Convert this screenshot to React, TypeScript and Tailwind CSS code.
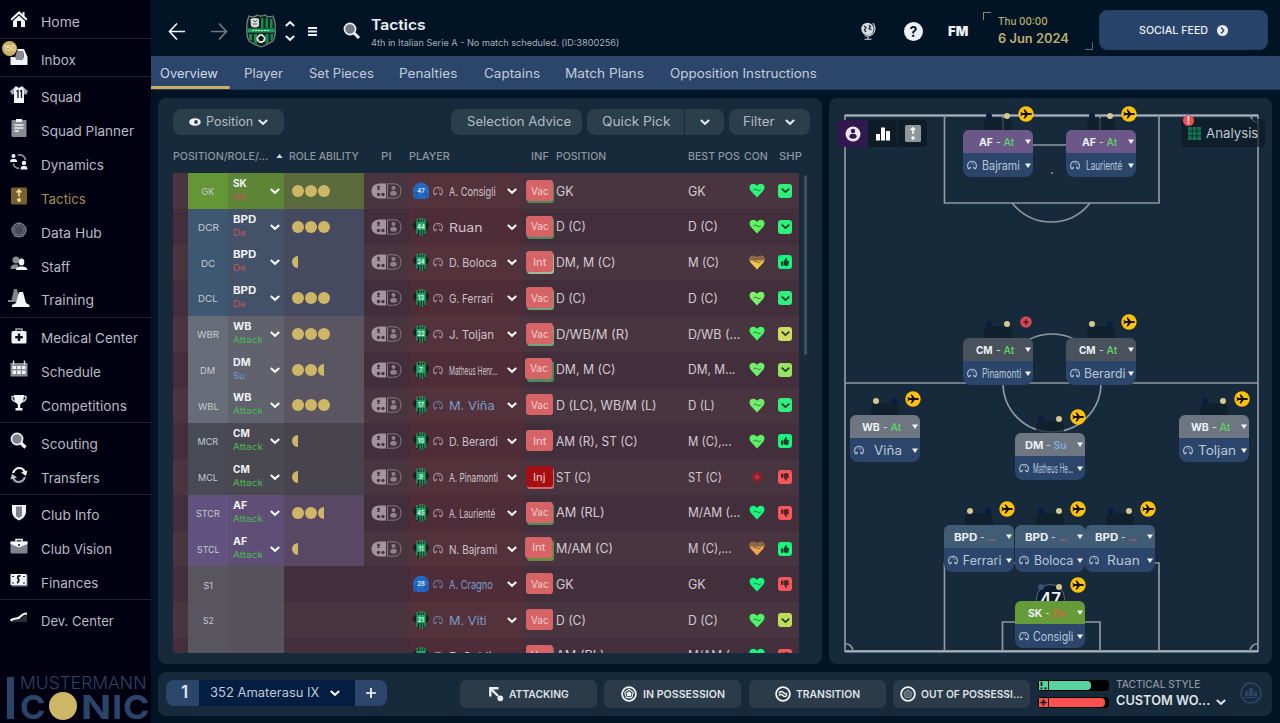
import React, { useLayoutEffect, useRef, useState } from "react";
import { FaThumbsUp, FaThumbsDown } from "react-icons/fa";

// Text squeezed or stretched to a fixed width, like the in-game labels
function Fit({ w, children, className = "" }: { w: number; children: string; className?: string }) {
  const ref = useRef<HTMLSpanElement>(null);
  const [scale, setScale] = useState(1);
  useLayoutEffect(() => {
    if (ref.current) setScale(w / ref.current.offsetWidth);
  }, [w, children]);
  return (
    <span className={`block shrink-0 whitespace-nowrap ${className}`} style={{ width: w }}>
      <span ref={ref} className="inline-block origin-left translate-y-px" style={{ transform: `scaleX(${scale})` }}>
        {children}
      </span>
    </span>
  );
}

function Chevron({ className = "w-2.5 h-2.5" }: { className?: string }) {
  return (
    <svg viewBox="0 0 10 10" className={`shrink-0 ${className}`} fill="none" stroke="currentColor" strokeWidth="2">
      <path d="M0.8 3 L5 6.8 L9.2 3" />
    </svg>
  );
}

function PersonOutline({ className = "" }: { className?: string }) {
  return (
    <svg viewBox="0 0 10 10" className={`w-2.5 h-2.5 shrink-0 ${className}`}>
      <path d="M1.600 9 C0.400 7 0.500 4.500 1.500 2.800 C3 0.700 7 0.700 8.500 2.800 C9.500 4.500 9.600 7 8.400 9" fill="none" stroke="currentColor" strokeWidth="1.100" />
      <path d="M3.600 3.300 Q5 2 6.400 3.300 V5" fill="none" stroke="currentColor" strokeWidth="0.600" />
      <path d="M1.300 9.300 Q2 7 4 6.600 L3.800 8 L2.600 9.300 Z M8.700 9.300 Q8 7 6 6.600 L6.200 8 L7.400 9.300 Z" fill="currentColor" />
    </svg>
  );
}

/* ---------- sidebar ---------- */

const icons: Record<string, React.ReactNode> = {
  Home: (
    <>
      <path d="M9 1 L0.5 9 L2 10.5 L9 4 L16 10.5 L17.5 9 L14.5 6 V2 H12.5 V4.2 Z" fill="#f4f4f6" />
      <path d="M3 11 L9 5.5 L15 11 V17 H11 V11 H7 V17 H3 Z" fill="#f4f4f6" />
    </>
  ),
  Inbox: (
    <>
      <path d="M7 1 H14 L17.5 9 V17 H0.5 V9 H5 L7 12 H12 L14 9 L13 3 H8 Z" fill="#f4f4f6" />
      <path d="M7 3 H13 L14 9 L12 12 H7 L5 9 Z" fill="#8a8a98" />
    </>
  ),
  Squad: (
    <>
      <path d="M5 1 L0 5 L2 9 L5 7 M13 1 L18 5 L16 9 L13 7" fill="#a4a4b0" />
      <path d="M5 0.5 H7 Q9 3 11 0.5 H13 L14 5 V17 H4 V5 Z" fill="#f4f4f6" />
      <path d="M6.5 5.5 L8 4.5 V12 M10 5.5 L11.5 4.5 V12" fill="none" stroke="#101020" strokeWidth="1.3" />
    </>
  ),
  "Squad Planner": (
    <>
      <rect x="1.5" y="1" width="15" height="17" rx="1" fill="#8a8a95" />
      <path d="M6 0 H12 V3 H6 Z" fill="#f4f4f6" />
      <path d="M4.500 6 H13.500 M4.500 9 H13.500 M4.500 12 H9" stroke="#f4f4f6" strokeWidth="1.3" />
    </>
  ),
  Dynamics: (
    <>
      <circle cx="3.500" cy="3" r="2" fill="#f4f4f6" />
      <path d="M0 9 Q0 6 2.500 6 H4.500 Q7 6 7 9 Z" fill="#f4f4f6" />
      <circle cx="14" cy="10" r="2.200" fill="#f4f4f6" />
      <path d="M10.500 16.500 Q10.500 13 13 13 H15 Q17.500 13 17.500 16.500 Z" fill="#f4f4f6" />
      <path d="M8 2 Q14 1 15.500 7 M3.500 10.500 Q4 15 9 15.500" fill="none" stroke="#8a8a95" strokeWidth="1.800" />
    </>
  ),
  Tactics: (
    <>
      <rect x="1" y="0.500" width="16" height="17" rx="1.500" fill="#75602f" />
      <path d="M9 3 V9.500 M6.500 5.500 L9 3 L11.500 5.500" fill="none" stroke="#f2dc92" strokeWidth="1.600" />
      <circle cx="9" cy="13" r="1.900" fill="#f2dc92" />
    </>
  ),
  "Data Hub": (
    <>
      <circle cx="9" cy="9" r="7" fill="#4a4a57" stroke="#9696a2" strokeWidth="1" />
      <path d="M9 4 L14 8 L12 13.500 H6 L4 8 Z M9 1 V4 M14 8 L17 7 M12 13.500 L14 16 M6 13.500 L4 16 M4 8 L1 7" fill="none" stroke="#6a6a78" strokeWidth="0.900" />
    </>
  ),
  Staff: (
    <>
      <circle cx="6" cy="5" r="3.500" fill="#8a8a95" />
      <path d="M0.500 13 Q1 10 4 9.500 H8 V14 H0.500 Z" fill="#8a8a95" />
      <ellipse cx="11.500" cy="7" rx="2.800" ry="3.500" fill="#f4f4f6" />
      <path d="M6 15 Q6 12 9.500 11.500 H13.500 Q17 12 17.500 15 Z" fill="#f4f4f6" />
    </>
  ),
  Training: (
    <>
      <path d="M4 0 H7 L9.500 11 L11 13 H-2 V11 H1.500 Z" fill="#83838d" />
      <path d="M9 3 H13 L16 14 L19.500 16 V18 H2 V16 L6 14 Z" fill="#f4f4f6" />
    </>
  ),
  "Medical Center": (
    <>
      <path d="M6 5 V2 H12 V5" fill="none" stroke="#a4a4b0" strokeWidth="1.500" />
      <rect x="1.500" y="4" width="15" height="12.500" rx="1.500" fill="#f4f4f6" />
      <path d="M9 6.500 V14 M5.200 10.200 H12.800" stroke="#101020" strokeWidth="2.400" />
    </>
  ),
  Schedule: (
    <>
      <rect x="0.500" y="3" width="17" height="13.500" fill="#8a8a95" />
      <path d="M3.500 0.500 V5 M14.500 0.500 V5" stroke="#d4d4da" strokeWidth="1.500" />
      <path d="M2.500 6 H6 V9 H2.500 Z M7.200 6 H10.800 V9 H7.200 Z M12 6 H15.500 V9 H12 Z M2.500 10.500 H6 V14 H2.500 Z M7.200 10.500 H10.800 V14 H7.200 Z M12 10.500 H15.500 V14 H12 Z" fill="#f4f4f6" />
    </>
  ),
  Competitions: (
    <>
      <path d="M4.500 2.500 H2 Q1.500 7 6.500 8 M13.500 2.500 H16 Q16.500 7 11.500 8" fill="none" stroke="#c8c8d0" strokeWidth="1.500" />
      <path d="M4 1 H14 Q14 8 10.200 10.500 V14 H12.500 V16.500 H5.500 V14 H7.800 V10.500 Q4 8 4 1 Z" fill="#f4f4f6" />
    </>
  ),
  Scouting: (
    <>
      <path d="M10.500 10.500 L15.500 15.500" stroke="#f4f4f6" strokeWidth="3.200" />
      <circle cx="7" cy="7" r="5.600" fill="#83838d" stroke="#f4f4f6" strokeWidth="1.600" />
    </>
  ),
  Transfers: (
    <>
      <path d="M3 7 Q5 2 9.500 2 Q13 2 14.800 6" fill="none" stroke="#f4f4f6" strokeWidth="2.200" />
      <path d="M11 6.500 L17.500 4.500 L16 10 Z" fill="#f4f4f6" />
      <path d="M15 11 Q13 16 8.500 16 Q5 16 3.200 12" fill="none" stroke="#a4a4b0" strokeWidth="2.200" />
      <path d="M7 11.500 L0.500 13.500 L2 8 Z" fill="#c8c8d0" />
    </>
  ),
  "Club Info": (
    <>
      <path d="M2 1 H16 V8 Q16 13 9 16.500 Q2 13 2 8 Z" fill="#f4f4f6" />
      <path d="M6 2.500 H12 V12 L9 14 L6 12 Z" fill="#83838d" />
    </>
  ),
  "Club Vision": (
    <>
      <path d="M6 4 V1.500 H12 V4" fill="none" stroke="#f4f4f6" strokeWidth="1.500" />
      <rect x="0.500" y="3.500" width="17" height="12" rx="1" fill="#83838d" />
      <path d="M0.500 3.500 H17.500 V6 L9 9.500 L0.500 6 Z" fill="#f4f4f6" />
      <circle cx="9" cy="7" r="1" fill="#101020" />
    </>
  ),
  Finances: (
    <>
      <rect x="1.500" y="4" width="16" height="11.500" fill="#83838d" />
      <path d="M0.500 3 H16.500 V14 H0.500 Z" fill="#f4f4f6" />
      <path d="M10.500 5 Q7 4.500 8 7.500 Q10 10 7 12 M3 6 V5 M3 11.500 V12.500 M14 6 V5 M14 11.500 V12.500" fill="none" stroke="#101020" strokeWidth="1.800" />
    </>
  ),
  "Dev. Center": (
    <>
      <path d="M1 12 L6 10 L10 10 L17 5 V13 H1 Z" fill="#2c2c38" />
      <path d="M0.500 11.500 Q3.500 9.500 6 9.500 Q9 9.500 11 7 Q13 4.500 17 4.500" fill="none" stroke="#f4f4f6" strokeWidth="2.200" />
    </>
  ),
};

const menu: [string, number][][] = [
  [["Home", 38.5]],
  [["Inbox", 35]],
  [["Squad", 40], ["Squad Planner", 93.5], ["Dynamics", 63.5], ["Tactics", 45], ["Data Hub", 60.5], ["Staff", 29], ["Training", 52.5]],
  [["Medical Center", 96.5], ["Schedule", 59.5], ["Competitions", 85.5]],
  [["Scouting", 56.5], ["Transfers", 58.5]],
  [["Club Info", 58], ["Club Vision", 71.5], ["Finances", 57]],
  [["Dev. Center", 72.5]],
];

function Sidebar() {
  return (
    <aside className="w-[151px] h-full shrink-0 bg-[#000010] pt-1 flex flex-col">
      {menu.map((group, i) => (
        <div key={i} className={i > 0 ? "border-t border-[#202133] pt-[3px]" : ""}>
          {group.map(([label, w]) => (
            <div key={label} className="relative h-[33.85px] flex items-center pl-2.5 gap-[13px]">
              <svg viewBox="0 0 18 18" className="w-[18px] h-[18px] shrink-0 overflow-visible -mt-1">
                {icons[label]}
              </svg>
              <Fit w={w} className={`text-[13px] pt-px ${label === "Tactics" ? "text-[#a58d50]" : "text-[#b9bac3]"}`}>
                {label}
              </Fit>
              {label === "Inbox" && (
                <span className="absolute left-[2px] -top-px w-[15px] h-[15px] rounded-full bg-[#c9b062] text-[8px] leading-[15px] text-[#f4ecd0] text-center tracking-tighter">
                  150
                </span>
              )}
            </div>
          ))}
        </div>
      ))}
      <div className="mt-auto pl-[7px] flex gap-[6px] h-[49px]">
        <div className="w-[7px] h-[42px] mt-[3px] bg-[#2a4568]" />
        <div className="text-[#2a4568]">
          <Fit w={126} className="text-[17.5px] leading-[15px] font-light">MUSTERMANN</Fit>
          <div className="flex items-center h-[30px] mt-0.5 gap-[4px] font-bold text-[33px] leading-[30px]">
            <Fit w={25}>C</Fit>
            <span className="w-7 h-7 rounded-full bg-[#cdb766] shrink-0" />
            <Fit w={30}>N</Fit>
            <Fit w={10} className="-ml-[3px]">I</Fit>
            <Fit w={26} className="-ml-[3px]">C</Fit>
          </div>
        </div>
      </div>
    </aside>
  );
}

/* ---------- header ---------- */

function Crest() {
  return (
    <svg viewBox="0 0 32 34" className="w-8 h-[34px]">
      <path d="M4 2 Q9 4 12 1 Q16 3 20 1 Q23 4 28 2 Q31 9 30 15 Q31 22 28 27 Q22 31 16 33 Q10 31 4 27 Q1 22 2 15 Q1 9 4 2 Z" fill="#10251f" stroke="#7b807e" strokeWidth="1.300" />
      <path d="M16 4 H18.500 V14 H16 Z M20.500 4 H23 V14 H20.500 Z M25 5 H27.500 V14 H25 Z" fill="#178a50" />
      <path d="M5.500 5 Q10 3 14 5 V12 Q10 15 6 12 Z" fill="#d5d9d7" />
      <path d="M8 6 L10 8 L12 6 M8 10 H12" stroke="#555c5a" strokeWidth="1" fill="none" />
      <rect x="2.500" y="14.500" width="27" height="4" fill="#1d9e5e" />
      <path d="M7 16.500 H25" stroke="#bfe6d0" strokeWidth="1.200" strokeDasharray="2 1" />
      <path d="M4 20 H7 V27 L4 25 Z M9 20 H12 V30 L9 29 Z M20.500 20 H23.500 V29 L20.500 30 Z M25.500 20 H28.500 L27.500 26 L25.500 27 Z" fill="#178a50" />
      <circle cx="16" cy="24.500" r="4.600" fill="#e3e6e5" />
      <path d="M16 22 L18.400 23.800 L17.500 26.500 H14.500 L13.600 23.800 Z M12 22 L13.500 21 M18.500 20.500 L20 22.500 M13 28 L14 28.800 M19 28 L18 29" fill="#161616" stroke="#161616" strokeWidth="1" />
    </svg>
  );
}

function Header() {
  return (
    <header className="h-14 flex items-center pl-[17px] pr-3 pt-[6px] text-[#eef0f3]">
      <svg viewBox="0 0 18 18" className="w-[18px] h-[18px]" fill="none" stroke="currentColor" strokeWidth="1.700">
        <path d="M17 9.500 H1.500 M9 1.500 L1.500 9.500 L9 17.500" />
      </svg>
      <svg viewBox="0 0 18 18" className="w-[18px] h-[18px] ml-6 text-[#6d7780]" fill="none" stroke="currentColor" strokeWidth="1.700">
        <path d="M1 9.500 H16.500 M9 1.500 L16.500 9.500 L9 17.500" />
      </svg>
      <div className="ml-[17px]"><Crest /></div>
      <div className="flex flex-col gap-[4px] ml-[8px]">
        <Chevron className="w-[10px] h-[10px] rotate-180" />
        <Chevron className="w-[10px] h-[10px]" />
      </div>
      <svg viewBox="0 0 9 9" className="w-[9px] h-[9px] ml-[13px]" stroke="currentColor" strokeWidth="1.900">
        <path d="M0 1 H9 M0 4.500 H9 M0 8 H9" />
      </svg>
      <svg viewBox="0 0 18 18" className="w-[18px] h-[18px] ml-[26px]">
        <path d="M10.500 10.500 L16 16" stroke="#f4f4f6" strokeWidth="3" />
        <circle cx="7" cy="7" r="5.600" fill="#717b84" stroke="#f4f4f6" strokeWidth="1.600" />
      </svg>
      <div className="ml-[10px]">
        <Fit w={55} className="text-[14.5px] leading-[20px] font-semibold">Tactics</Fit>
        <Fit w={248} className="text-[9px] leading-[14px] mt-px text-[#a7b0b8]">4th in Italian Serie A - No match scheduled. (ID:3800256)</Fit>
      </div>

      <svg viewBox="0 0 18 18" className="w-[18px] h-[18px] ml-auto text-[#d8dcdf]">
        <circle cx="7.500" cy="7" r="6.200" fill="currentColor" />
        <path d="M4 4 L6 5.500 L4.500 8 L6 10 M9 3 L10.500 4.500 L9 6.500 L11.500 8" fill="none" stroke="#243441" strokeWidth="1.400" />
        <path d="M13 1 Q17.500 8 12 12.500 Q8.500 15 4.500 13.500 M8 14 V17 M4.500 17.200 H11.500" fill="none" stroke="currentColor" strokeWidth="1.100" />
      </svg>
      <div className="w-[19px] h-[19px] ml-[26px] rounded-full bg-[#eef0f3] text-[#051526] text-[14px] leading-[20px] font-bold text-center">?</div>
      <Fit w={20} className="ml-[25px] text-[12.5px] font-black">FM</Fit>
      <div className="relative ml-[15px] w-[110px] h-[38px] pl-[15px] -mt-px text-[#bfae6c]">
        <span className="absolute left-0 top-0 w-2 h-2 border-t border-l border-[#8f8a6a]" />
        <span className="absolute right-0 bottom-0 w-2 h-2 border-b border-r border-[#5d6a6b]" />
        <Fit w={50} className="text-[10.5px] leading-[14px] mt-[2px] font-medium">Thu 00:00</Fit>
        <Fit w={71} className="text-[12.5px] leading-[16px] mt-[2px] font-semibold">6 Jun 2024</Fit>
      </div>
      <button className="ml-[6px] -mt-0.5 w-[169px] h-10 rounded-lg bg-[#29446a] border border-[#24405f] flex items-center justify-center gap-[9px]">
        <Fit w={69} className="text-[10.5px] font-medium">SOCIAL FEED</Fit>
        <span className="w-[11px] h-[11px] rounded-full bg-[#e9edf2] text-[#29446a] flex items-center justify-center">
          <Chevron className="w-[7px] h-[7px] -rotate-90" />
        </span>
      </button>
    </header>
  );
}

const tabs: [string, number][] = [
  ["Overview", 58], ["Player", 39.5], ["Set Pieces", 64.5], ["Penalties", 58.5],
  ["Captains", 56], ["Match Plans", 78.5], ["Opposition Instructions", 147],
];

function TabBar() {
  return (
    <nav className="h-[34px] bg-[#2c466b] flex gap-[25.8px] pl-[9px] border-b border-[#223a5c]">
      {tabs.map(([label, w], i) => (
        <div key={label} className="relative h-full flex items-center">
          <Fit w={w} className={`text-[12.5px] pt-px ${i === 0 ? "text-[#d2dae6]" : "text-[#c3ccda]"}`}>{label}</Fit>
          {i === 0 && <span className="absolute -left-[9px] -right-[12px] bottom-0 h-[3px] bg-[#c9b062] rounded-r-sm" />}
        </div>
      ))}
    </nav>
  );
}

/* ---------- squad table ---------- */

type Kind = "gk" | "d" | "wb" | "mc" | "st" | "sub";
const tones: Record<Kind, [string, string, string]> = {
  gk: ["bg-[#659635]", "bg-[#5f8536]", "bg-[#5a6a3d]"],
  d: ["bg-[#3f5871]", "bg-[#435169]", "bg-[#454a60]"],
  wb: ["bg-[#666c78]", "bg-[#60626d]", "bg-[#5a5661]"],
  mc: ["bg-[#484b55]", "bg-[#4a4851]", "bg-[#48444d]"],
  st: ["bg-[#62527f]", "bg-[#5f4f76]", "bg-[#594863]"],
  sub: ["bg-[#59555f]", "bg-[#57525b]", ""],
};

interface Row {
  pos: string; pw: number; kind: Kind;
  role?: string; rw?: number; duty?: string; stars?: number;
  no: string; name: string; nw: number; blue?: boolean; keeper?: boolean;
  inf: string; back?: string; deep?: boolean;
  position: string; posw: number; best: string; bw: number;
  heart: string; half?: boolean; shape: "check" | "up" | "down"; shapeColor: string;
}

const rows: Row[] = [
  { pos: "GK", pw: 13, kind: "gk", role: "SK", rw: 14, duty: "De", stars: 3, no: "47", name: "A. Consigli", nw: 47, keeper: true, inf: "Vac", back: "bg-[#4a8a5b]", position: "GK", posw: 18, best: "GK", bw: 18, heart: "#2ef37c", shape: "check", shapeColor: "bg-[#2ff07a]" },
  { pos: "DCR", pw: 21, kind: "d", role: "BPD", rw: 23, duty: "De", stars: 3, no: "44", name: "Ruan", nw: 34, inf: "Vac", back: "bg-[#4a8a5b]", position: "D (C)", posw: 30, best: "D (C)", bw: 30, heart: "#5ff25f", shape: "check", shapeColor: "bg-[#2ff07a]" },
  { pos: "DC", pw: 14, kind: "d", role: "BPD", rw: 23, duty: "De", stars: 0.5, no: "24", name: "D. Boloca", nw: 48, inf: "Int", back: "bg-[#9dc09a]", position: "DM, M (C)", posw: 60, best: "M (C)", bw: 31, heart: "#f2c64b", half: true, shape: "up", shapeColor: "bg-[#17f57d]" },
  { pos: "DCL", pw: 19.5, kind: "d", role: "BPD", rw: 23, duty: "De", stars: 3, no: "13", name: "G. Ferrari", nw: 44, inf: "Vac", back: "bg-[#6fa578]", position: "D (C)", posw: 30, best: "D (C)", bw: 30, heart: "#7df066", shape: "check", shapeColor: "bg-[#2ff07a]" },
  { pos: "WBR", pw: 22.5, kind: "wb", role: "WB", rw: 18.5, duty: "Attack", stars: 3, no: "22", name: "J. Toljan", nw: 45, inf: "Vac", back: "bg-[#6fa578]", position: "D/WB/M (R)", posw: 73, best: "D/WB (...", bw: 52, heart: "#4df56c", shape: "check", shapeColor: "bg-[#cfdc62]" },
  { pos: "DM", pw: 15.5, kind: "wb", role: "DM", rw: 18, duty: "Su", stars: 2.5, no: "7", name: "Matheus Henr...", nw: 49, inf: "Vac", back: "bg-[#4a8a5b]", deep: true, position: "DM, M (C)", posw: 60, best: "DM, M...", bw: 48, heart: "#6ff06a", shape: "check", shapeColor: "bg-[#99e364]" },
  { pos: "WBL", pw: 21, kind: "wb", role: "WB", rw: 18.5, duty: "Attack", stars: 3, no: "17", name: "M. Viña", nw: 46, blue: true, inf: "Vac", position: "D (LC), WB/M (L)", posw: 101, best: "D (L)", bw: 27, heart: "#6ff06a", shape: "check", shapeColor: "bg-[#2ff07a]" },
  { pos: "MCR", pw: 21, kind: "mc", role: "CM", rw: 17, duty: "Attack", stars: 0.5, no: "10", name: "D. Berardi", nw: 49, inf: "Int", position: "AM (R), ST (C)", posw: 82, best: "M (C),...", bw: 43, heart: "#5cf268", shape: "up", shapeColor: "bg-[#17f57d]" },
  { pos: "MCL", pw: 20, kind: "mc", role: "CM", rw: 17, duty: "Attack", stars: 0.5, no: "9", name: "A. Pinamonti", nw: 49, inf: "Inj", back: "bg-[#d8666a]", position: "ST (C)", posw: 35, best: "ST (C)", bw: 34, heart: "", shape: "down", shapeColor: "bg-[#f5575b]" },
  { pos: "STCR", pw: 24, kind: "st", role: "AF", rw: 14, duty: "Attack", stars: 2.5, no: "45", name: "A. Laurienté", nw: 46, inf: "Vac", back: "bg-[#4a8a5b]", position: "AM (RL)", posw: 49, best: "M/AM (...", bw: 52, heart: "#17f57d", shape: "down", shapeColor: "bg-[#f5575b]" },
  { pos: "STCL", pw: 22.5, kind: "st", role: "AF", rw: 14, duty: "Attack", stars: 0.5, no: "11", name: "N. Bajrami", nw: 48, inf: "Int", back: "bg-[#6f8a45]", deep: true, position: "M/AM (C)", posw: 57, best: "M (C),...", bw: 43, heart: "#f2a24b", half: true, shape: "up", shapeColor: "bg-[#17f57d]" },
  { pos: "S1", pw: 9, kind: "sub", no: "28", name: "A. Cragno", nw: 44, blue: true, keeper: true, inf: "Vac", position: "GK", posw: 18, best: "GK", bw: 18, heart: "#17f57d", shape: "down", shapeColor: "bg-[#f5575b]" },
  { pos: "S2", pw: 10.5, kind: "sub", no: "21", name: "M. Viti", nw: 38, blue: true, inf: "Vac", position: "D (C)", posw: 30, best: "D (C)", bw: 30, heart: "#4df56c", shape: "check", shapeColor: "bg-[#bfdc5e]" },
  { pos: "S3", pw: 10.5, kind: "sub", no: "5", name: "E. Goldi", nw: 42, inf: "Vac", back: "bg-[#4a8a5b]", position: "AM (RL)", posw: 49, best: "M/AM (...", bw: 52, heart: "#17f57d", shape: "down", shapeColor: "bg-[#f5575b]" },
];

const dutyTone: Record<string, string> = { De: "text-[#c25458]", Su: "text-[#6d9cd0]", Attack: "text-[#4fb954]" };
const dutyWidth: Record<string, number> = { De: 13, Su: 11.5, Attack: 30 };

function Stars({ n }: { n: number }) {
  return (
    <div className="flex gap-[1.500px]">
      {Array.from({ length: Math.floor(n) }, (_, i) => (
        <span key={i} className="w-[11.600px] h-[12px] rounded-full bg-[#cdb766]" />
      ))}
      {n % 1 > 0 && <span className="w-[6px] h-[12px] rounded-l-full bg-[#cdb766]" />}
    </div>
  );
}

function Kit({ no, keeper }: { no: string; keeper?: boolean }) {
  return (
    <svg viewBox="0 0 18 20" className="w-[18px] h-5 shrink-0">
      {keeper ? (
        <>
          <path d="M1.500 17 L1 9 Q2 2 9 1.500 Q16 2 17 9 L16.500 17 Q9 19.500 1.500 17 Z" fill="#2367c4" />
          <path d="M4 17 V11 M14 17 V11" stroke="#1a4f9b" strokeWidth="1" />
        </>
      ) : (
        <>
          <path d="M5 3 L0.500 8 L3 13 L5 11 V18 H13 V11 L15 13 L17.500 8 L13 3 Z" fill="#17211f" />
          <path d="M5 2 V17 M8 1 V18.500 M10.500 1 V18.500 M13 2 V17" stroke="#1b9d5e" strokeWidth="1.400" />
          <rect x="5" y="5" width="8" height="8" fill="#22a566" />
        </>
      )}
      <text x="9" y="11.800" textAnchor="middle" fontSize="6" fontWeight="600" fill="#dff6ea">{no}</text>
    </svg>
  );
}

function PiToggle() {
  return (
    <svg viewBox="0 0 31 16" className="w-[31px] h-4">
      <path d="M15 0.500 H8 Q0.500 1 0.500 8 Q0.500 15 8 15.500 H15 Z" fill="#a3949d" />
      <path d="M16.500 0.800 H23 Q30 1 30 8 Q30 15 23 15.200 H16.500 Z" fill="none" stroke="#87777f" strokeWidth="1" />
      <g fill="#463540">
        <circle cx="7.500" cy="4" r="1.500" /><circle cx="7.500" cy="11.500" r="1.700" /><circle cx="12" cy="11.500" r="1.700" />
        <path d="M5.800 7 L7.500 5 L9.200 7 Z" />
      </g>
      <circle cx="22.500" cy="5" r="2" fill="#8e7f88" />
      <ellipse cx="22.500" cy="10.300" rx="3.300" ry="2.500" fill="#8e7f88" />
    </svg>
  );
}

function Condition({ row }: { row: Row }) {
  if (!row.heart) {
    return (
      <svg viewBox="0 0 12 12" className="w-3 h-3">
        <circle cx="6" cy="6" r="5" fill="#8e2029" />
        <path d="M6 3.500 V8.500 M3.500 6 H8.500" stroke="#c93a42" strokeWidth="1.400" />
      </svg>
    );
  }
  return (
    <svg viewBox="0 0 16 15" className="w-4 h-[15px]">
      <path d="M8 14.500 L1.500 7.500 Q-0.500 4 1.500 1.800 Q5 -0.800 8 2.800 Q11 -0.800 14.500 1.800 Q16.500 4 14.500 7.500 Z" fill={row.heart} />
      {row.half && <path d="M0.600 5.500 Q0.200 3 1.500 1.800 Q5 -0.800 8 2.800 Q11 -0.800 14.500 1.800 Q15.800 3 15.400 5.500 Z" fill="#8a6546" />}
      <path d="M4.500 7 Q6 5 8 6.800 T11.800 6.800" fill="none" stroke="#3b5340" strokeWidth="0.800" />
    </svg>
  );
}

function Sharpness({ row }: { row: Row }) {
  return (
    <span className={`w-[14px] h-[14px] rounded-[3px] flex items-center justify-center text-[#20392f] ${row.shapeColor}`}>
      {row.shape === "check" && <Chevron className="w-[9px] h-[9px]" />}
      {row.shape === "up" && <FaThumbsUp size={8} />}
      {row.shape === "down" && <FaThumbsDown size={8} color="#54242b" />}
    </span>
  );
}

function SquadRow({ row, odd }: { row: Row; odd: boolean }) {
  const [a, b, c] = tones[row.kind];
  return (
    <div className={`flex h-[35.77px] shrink-0 text-[#d3c9d0] ${odd ? "bg-[#432f3b]" : "bg-[#483540]"}`}>
      <div className="w-[15px] shrink-0" />
      <div className={`w-10 shrink-0 flex items-center justify-center ${a}`}>
        <Fit w={row.pw} className="text-[9px] text-[#c6cbd1]">{row.pos}</Fit>
      </div>
      <div className={`w-14 shrink-0 flex items-center justify-between pl-[5px] pr-[4px] ${b}`}>
        {row.role && row.duty && (
          <>
            <div className="-mt-1">
              <Fit w={row.rw!} className="text-[10px] leading-[13px] font-bold text-[#f1f2f4]">{row.role}</Fit>
              <Fit w={dutyWidth[row.duty]} className={`text-[9px] leading-[13px] ${dutyTone[row.duty]}`}>{row.duty}</Fit>
            </div>
            <Chevron className="w-[10px] h-[10px] text-white" />
          </>
        )}
      </div>
      <div className={`w-20 shrink-0 flex items-center pl-2 ${c}`}>{row.stars && <Stars n={row.stars} />}</div>
      <div className="w-[45px] shrink-0 flex items-center pl-[7px]">{row.stars && <PiToggle />}</div>
      <div className={`w-[114px] shrink-0 flex items-center pl-[3px] ${odd ? "bg-[#4e2d38]" : "bg-[#54323c]"} ${row.blue ? "text-[#7a9dcb]" : "text-[#cdc2c8]"}`}>
        <Kit no={row.no} keeper={row.keeper} />
        <PersonOutline className="ml-[3px] opacity-70" />
        <Fit w={row.nw} className="ml-[6px] text-[12px]">{row.name}</Fit>
        <Chevron className="w-[10px] h-[10px] ml-auto mr-[6px] text-white" />
      </div>
      <div className="w-[33px] shrink-0 flex items-center pl-[3px]">
        <div className="relative w-[27px] h-[22px]">
          {row.back && <span className={`absolute left-[1px] top-[2px] w-[27px] h-[21px] rounded-[3px] ${row.back}`} />}
          <span className={`absolute w-[27px] h-[21px] rounded-[3px] flex items-center justify-center text-[#f3cfd0] ${row.inf === "Inj" ? "bg-[#a50f12]" : "bg-[#d66466]"} ${row.deep ? "-left-px -top-px" : "left-0 top-0"}`}>
            <Fit w={row.inf === "Vac" ? 18 : 13} className="text-[10.500px]">{row.inf}</Fit>
          </span>
        </div>
      </div>
      <div className="w-[132px] shrink-0 flex items-center"><Fit w={row.posw} className="text-[12.5px]">{row.position}</Fit></div>
      <div className="w-[60px] shrink-0 flex items-center"><Fit w={row.bw} className="text-[12.5px]">{row.best}</Fit></div>
      <div className="w-[18px] shrink-0 flex items-center justify-center"><Condition row={row} /></div>
      <div className="w-[33px] shrink-0 flex items-center justify-center pl-[5px]"><Sharpness row={row} /></div>
    </div>
  );
}

function SquadPanel() {
  return (
    <section className="w-[664px] shrink-0 rounded-lg bg-[#172a3b] pl-[15px] pt-[11px] pb-[11px]">
      <div className="flex pr-3 h-[26px] text-[12.5px] text-[#b2bcc4]">
        <button className="w-[111px] rounded-lg bg-[#2b3e4c] flex items-center justify-center gap-[5px]">
          <svg viewBox="0 0 12 8" className="w-3 h-2">
            <ellipse cx="6" cy="4" rx="5.800" ry="3.800" fill="#f0f2f4" />
            <circle cx="7" cy="4" r="1.900" fill="#2b3e4c" />
          </svg>
          <Fit w={47} className="-mt-0.5">Position</Fit>
          <Chevron className="w-[10px] h-[10px] text-[#e8ecef]" />
        </button>
        <button className="ml-auto w-[131px] rounded-lg bg-[#2b3e4c] flex items-center justify-center">
          <Fit w={104} className="-mt-px">Selection Advice</Fit>
        </button>
        <button className="ml-[5px] w-[97px] rounded-l-lg bg-[#2b3e4c] flex items-center justify-center pr-1">
          <Fit w={69} className="-mt-px">Quick Pick</Fit>
        </button>
        <button className="ml-px w-[39px] rounded-r-lg bg-[#2b3e4c] flex items-center justify-center text-[#e8ecef]"><Chevron /></button>
        <button className="ml-[5px] w-[81px] rounded-lg bg-[#2b3e4c] flex items-center justify-center gap-[11px] pr-0.5">
          <Fit w={32} className="-mt-px">Filter</Fit>
          <Chevron className="w-[10px] h-[10px] text-[#e8ecef]" />
        </button>
      </div>
      <div className="flex items-center h-[38px] pt-1 text-[10.5px] font-medium text-[#8d979f]">
        <Fit w={95}>POSITION/ROLE/...</Fit>
        <svg viewBox="0 0 8 5" className="w-[7px] h-1 ml-[8px] mr-[6px]"><path d="M4 0 L8 5 H0 Z" fill="#d5d9dd" /></svg>
        <Fit w={69.5}>ROLE ABILITY</Fit>
        <Fit w={11} className="ml-[22.5px]">PI</Fit>
        <Fit w={41} className="ml-[16.5px]">PLAYER</Fit>
        <Fit w={18} className="ml-[81.5px]">INF</Fit>
        <Fit w={50} className="ml-[7px]">POSITION</Fit>
        <Fit w={51.5} className="ml-[82px]">BEST POS</Fit>
        <Fit w={24} className="ml-[4.5px]">CON</Fit>
        <Fit w={22.500} className="ml-[10.5px]">SHP</Fit>
      </div>
      <div className="flex h-[480px]">
        <div className="w-[626px] overflow-hidden">
          {rows.map((r, i) => <SquadRow key={r.pos} row={r} odd={i % 2 === 1} />)}
        </div>
        <div className="w-[3px] h-[180px] ml-[5px] mt-0.5 rounded-full bg-[#3d5060]" />
      </div>
    </section>
  );
}

/* ---------- pitch ---------- */

interface Card {
  x: number; y: number; role: string; rw: number; duty: string; tone: string;
  name: string; nw: number; flip?: boolean; injured?: boolean; no?: string;
}

// coordinates are relative to the pitch panel
const cards: Card[] = [
  { x: 134, y: 32, role: "AF", rw: 14, duty: "At", tone: "bg-[#6b5889]", name: "Bajrami", nw: 38 },
  { x: 237, y: 32, role: "AF", rw: 14, duty: "At", tone: "bg-[#6b5889]", name: "Laurienté", nw: 36 },
  { x: 134, y: 240, role: "CM", rw: 17, duty: "At", tone: "bg-[#49515c]", name: "Pinamonti", nw: 39, injured: true },
  { x: 237, y: 240, role: "CM", rw: 17, duty: "At", tone: "bg-[#49515c]", name: "Berardi", nw: 41, flip: true },
  { x: 21, y: 317, role: "WB", rw: 18, duty: "At", tone: "bg-[#6d7681]", name: "Viña", nw: 28, flip: true },
  { x: 350, y: 317, role: "WB", rw: 18, duty: "At", tone: "bg-[#6d7681]", name: "Toljan", nw: 38 },
  { x: 186, y: 335, role: "DM", rw: 18, duty: "Su", tone: "bg-[#6d7681]", name: "Matheus He...", nw: 40 },
  { x: 115, y: 427, role: "BPD", rw: 23, duty: "...", tone: "bg-[#415d75]", name: "Ferrari", nw: 39, flip: true },
  { x: 186, y: 427, role: "BPD", rw: 23, duty: "...", tone: "bg-[#415d75]", name: "Boloca", nw: 39 },
  { x: 256, y: 427, role: "BPD", rw: 23, duty: "...", tone: "bg-[#415d75]", name: "Ruan", nw: 33 },
  { x: 186, y: 503, role: "SK", rw: 14, duty: "De", tone: "bg-[#659b38]", name: "Consigli", nw: 40, no: "47" },
];

const cardDuty: Record<string, string> = { At: "text-[#5fd463]", Su: "text-[#7fb4ec]", De: "text-[#e0603d]", "...": "text-[#e2606c]" };
const cardDutyWidth: Record<string, number> = { At: 11, Su: 13, De: 14, "...": 8 };

function Caret() {
  return <svg viewBox="0 0 6 5" className="w-[6px] h-[5px] shrink-0"><path d="M0 0.500 H6 L3 5 Z" fill="#f2f4f6" /></svg>;
}

function PlaneBadge() {
  return (
    <svg viewBox="0 0 16 16" className="absolute left-[55px] -top-[24px] w-4 h-4">
      <circle cx="8" cy="8" r="7.700" fill="#fcc20d" />
      <path d="M2.500 5.500 L4.500 7 H7 L5.500 3.500 H7 L9.800 7 H12.500 Q14 7.200 14 8 Q14 8.800 12.500 9 H9.800 L7 12.500 H5.500 L7 9 H4.500 L2.500 10.500 L3 8 Z" fill="#151106" />
    </svg>
  );
}

function PlayerCard({ card }: { card: Card }) {
  return (
    <div className="absolute w-[70px]" style={{ left: card.x, top: card.y }}>
      {card.no ? (
        <div className="absolute left-[21px] -top-[17px] w-[29px] h-[29px] rounded-full border border-[#5b6c84] bg-[#0c1a2b] text-[17px] leading-[28px] text-center font-semibold text-[#eef1f5]">
          {card.no}
        </div>
      ) : (
        <div className="absolute left-[21px] -top-[12px] w-[28px] h-[13px] rounded-t-md bg-[#101c28] opacity-70" />
      )}
      <span className={`absolute -top-[17px] w-[6px] h-[6px] rounded-full bg-[#d6c88d] ${card.flip ? "left-[23px]" : "left-[41px]"}`} />
      <span className={`absolute -top-[17px] w-[6px] h-[6px] rounded-full ${card.no ? "bg-[#3c4f74]" : "bg-[#0a1c44]"} ${card.flip ? "left-[41px]" : "left-[23px]"}`} />
      {card.injured ? (
        <svg viewBox="0 0 12 12" className="absolute left-[57px] -top-[22px] w-3 h-3">
          <circle cx="6" cy="6" r="5.800" fill="#cf4a55" />
          <path d="M6 3.500 V8.500 M3.500 6 H8.500" stroke="#5c1720" strokeWidth="1.700" />
        </svg>
      ) : (
        <PlaneBadge />
      )}
      <div className={`relative h-[23px] rounded-t-md flex items-center justify-end gap-[3px] pr-[2.500px] ${card.tone}`}>
        <Fit w={card.rw} className="text-[10.5px] font-bold text-[#eef1f4]">{card.role}</Fit>
        <span className="text-[10px] leading-none text-[#dfe3e8]">-</span>
        <Fit w={cardDutyWidth[card.duty]} className={`text-[10.5px] font-medium mr-[7px] ${cardDuty[card.duty]}`}>{card.duty}</Fit>
        <Caret />
      </div>
      <div className="relative h-[24px] rounded-b-lg bg-[#2c466b] flex items-center pl-[4px] pr-[2.500px] text-[#b9c6d8]">
        <PersonOutline />
        <div className="flex-1 flex justify-center pl-px"><Fit w={card.nw} className="text-[12.5px]">{card.name}</Fit></div>
        <Caret />
      </div>
    </div>
  );
}

function PitchPanel() {
  return (
    <section className="relative flex-1 rounded-lg bg-[#172a3b]">
      <svg viewBox="0 0 443 566" className="w-[443px] h-[566px]" fill="none" stroke="#8d98a2" strokeWidth="1.700">
        <rect x="16" y="17.500" width="413" height="535.500" />
        <path d="M16 553.500 H429 M16 17.500 H429" stroke="#a9b2ba" strokeWidth="2" />
        <path d="M16 285 H429 M115.500 17 V105 H330 V17 M183 105 Q199 124 222 124 Q246 124 261 105" />
        <path d="M174 17 V47 H271 V17" />
        <circle cx="223" cy="285" r="49" />
        <path d="M115.500 553 V465 H330 V553 M173.500 553 V524 H271 V553" />
        <path d="M16 545.500 A8 8 0 0 1 24 553.500 M429 545.500 A8 8 0 0 0 421 553.500 M429 24.500 A7 7 0 0 1 422 17.500" />
        <circle cx="223" cy="75" r="1" fill="#8d98a2" stroke="none" />
      </svg>
      <div className="absolute left-[9px] top-[22px] h-[27px] flex gap-px rounded overflow-hidden">
        <div className="w-[29px] bg-[#32184f] flex items-center justify-center">
          <svg viewBox="0 0 16 16" className="w-4 h-4">
            <circle cx="8" cy="8" r="7.500" fill="#eceaf0" />
            <circle cx="8" cy="5" r="2.200" fill="#32184f" />
            <ellipse cx="8" cy="10.200" rx="3.600" ry="2.500" fill="#32184f" />
          </svg>
        </div>
        <div className="w-[29px] bg-[#0e1c28] flex items-center justify-center">
          <svg viewBox="0 0 14 14" className="w-3.5 h-3.5" fill="#fff"><path d="M0 7 H4 V13.500 H0 Z M5 0.500 H9 V13.500 H5 Z M10 4 H14 V13.500 H10 Z" /></svg>
        </div>
        <div className="w-[29px] bg-[#0e1c28] flex items-center justify-center">
          <svg viewBox="0 0 16 17" className="w-4 h-[17px]">
            <rect width="16" height="17" rx="1.500" fill="#8f969c" />
            <path d="M8 3 V9 M5.800 5 L8 2.800 L10.200 5" fill="none" stroke="#fff" strokeWidth="1.500" />
            <circle cx="8" cy="13" r="1.700" fill="#fff" />
          </svg>
        </div>
      </div>
      <div className="absolute left-[352px] top-[21px] w-[84px] h-[28px] rounded bg-[#0d1a25]/70 flex items-center pl-[7px] gap-[5px]">
        <svg viewBox="0 0 13 13" className="w-[13px] h-[13px]" fill="#11764f">
          <path d="M0 0 H3.800 V3.800 H0 Z M4.600 0 H8.400 V3.800 H4.600 Z M9.200 0 H13 V3.800 H9.200 Z M0 4.600 H3.800 V8.400 H0 Z M4.600 4.600 H8.400 V8.400 H4.600 Z M9.200 4.600 H13 V8.400 H9.200 Z M0 9.200 H3.800 V13 H0 Z M4.600 9.200 H8.400 V13 H4.600 Z M9.200 9.200 H13 V13 H9.200 Z" />
        </svg>
        <Fit w={52} className="text-[13px] text-[#bcc5cd]">Analysis</Fit>
        <span className="absolute left-[2px] -top-[4px] w-[11px] h-[11px] rounded-full bg-[#f04b52] text-white text-[10px] leading-[11px] font-bold text-center">!</span>
      </div>
      {cards.map((c) => <PlayerCard key={c.name} card={c} />)}
    </section>
  );
}

/* ---------- bottom bar ---------- */

function PhaseIcon({ kind }: { kind: string }) {
  if (kind === "ATTACKING") {
    return (
      <svg viewBox="0 0 16 16" className="w-4 h-4">
        <path d="M2.300 10.500 V2.300 H10.500 M2.500 2.500 L10 10" fill="none" stroke="#eceff2" strokeWidth="2.400" />
        <circle cx="12.300" cy="12.300" r="2.900" fill="#eceff2" />
      </svg>
    );
  }
  return (
    <svg viewBox="0 0 16 16" className="w-4 h-4" fill="none" stroke="#f0f2f4" strokeWidth="1.800">
      <circle cx="8" cy="8" r="6.900" />
      {kind === "IN POSSESSION" && (
        <>
          <path d="M8 5.300 L10.600 7.200 L9.600 10.200 H6.400 L5.400 7.200 Z" fill="#f0f2f4" stroke="none" />
          <path d="M8 3.200 L12.300 6.400 L10.700 11.600 H5.300 L3.700 6.400 Z" strokeWidth="1.100" />
        </>
      )}
      {kind === "TRANSITION" && <path d="M4 7.500 Q5.500 4 8.500 6.500 Q10.500 9 12 7 M4 9.500 Q6 7.500 8 9.500 Q10 12 12 9" strokeWidth="1.400" />}
      {kind === "OUT" && <path d="M8 4 L12 7 L10.500 11.500 H5.500 L4 7 Z" fill="#5b6772" stroke="#7d8790" strokeWidth="1.200" />}
    </svg>
  );
}

const phases: [string, string, number][] = [
  ["ATTACKING", "ATTACKING", 60], ["IN POSSESSION", "IN POSSESSION", 82],
  ["TRANSITION", "TRANSITION", 64], ["OUT", "OUT OF POSSESSI...", 102],
];

function BottomBar() {
  return (
    <footer className="h-[44px] rounded-lg bg-[#172a3b] flex pl-2 pt-2 text-[#dfe3e8]">
      <div className="flex h-[26px] rounded-lg overflow-hidden">
        <div className="w-[33px] bg-[#2c466b] flex items-center justify-center pl-1 text-[17px] font-semibold">1</div>
        <div className="w-[156px] bg-[#031e41] flex items-center pl-[11px] text-[#bfc9d8]">
          <Fit w={109} className="text-[12.5px] -mt-px">352 Amaterasu IX</Fit>
          <Chevron className="w-[10px] h-[10px] ml-[11px] text-white" />
        </div>
        <div className="w-8 bg-[#2c466b] flex items-center justify-center">
          <svg viewBox="0 0 10 10" className="w-2.5 h-2.5" stroke="#fff" strokeWidth="1.700"><path d="M5 0 V10 M0 5 H10" /></svg>
        </div>
      </div>
      <div className="flex gap-[7.300px] ml-[73px]">
        {phases.map(([kind, label, w]) => (
          <button key={kind} className="w-[137px] h-7 rounded-md bg-[#2b3b4a] flex items-center justify-center gap-[5px]">
            <PhaseIcon kind={kind} />
            <Fit w={w} className="text-[10.5px] font-semibold -mt-px">{label}</Fit>
          </button>
        ))}
      </div>
      <div className="ml-[8px] w-[71px] flex flex-col gap-[6px]">
        <div className="h-[11px] rounded-sm bg-black p-px flex gap-px">
          <svg viewBox="0 0 9 9" className="w-[9px] h-[9px]"><rect width="9" height="9" fill="#58d3a0" /><path d="M2.500 0.800 V5 M2.500 6.500 V8.200 M5.500 7.300 H7.500" stroke="#000" strokeWidth="1.700" /></svg>
          <div className="w-[42px] rounded-r-sm bg-[#58d3a0]" />
        </div>
        <div className="h-[11px] rounded-sm bg-black p-px flex gap-px">
          <svg viewBox="0 0 9 9" className="w-[9px] h-[9px]"><rect width="9" height="9" fill="#f9514f" /><path d="M4.500 1.500 V7.500 M1.500 4.500 H7.500" stroke="#000" strokeWidth="1.600" /></svg>
          <div className="w-[56px] rounded-r-sm bg-[#f9514f]" />
        </div>
      </div>
      <div className="ml-[7px] -mt-[4px]">
        <Fit w={84} className="text-[10.500px] leading-[15px] font-medium text-[#8b959e]">TACTICAL STYLE</Fit>
        <Fit w={94} className="text-[12.500px] leading-[17px] font-semibold">CUSTOM WO...</Fit>
      </div>
      <Chevron className="w-[10px] h-[10px] ml-[6px] mt-[17px]" />
      <svg viewBox="0 0 22 22" className="w-[22px] h-[22px] ml-[14px] mt-[2px]">
        <circle cx="11" cy="11" r="10" fill="none" stroke="#2c4668" strokeWidth="1.500" />
        <path d="M5 9 H8.500 V14 H5 Z M9.300 6 H12.800 V14 H9.300 Z M13.600 9.500 H17 V14 H13.600 Z M4 15 H18 V16 H4 Z" fill="#2c4668" />
      </svg>
    </footer>
  );
}

export default function App() {
  return (
    <div className="w-[1280px] h-[723px] flex overflow-hidden bg-[#001426] font-['Inter','Open_Sans',sans-serif]">
      <Sidebar />
      <div className="flex-1 min-w-0 flex flex-col">
        <Header />
        <TabBar />
        <main className="pl-[7px] pr-2 pt-2 flex flex-col gap-2">
          <div className="flex gap-[7px] h-[566px]">
            <SquadPanel />
            <PitchPanel />
          </div>
          <BottomBar />
        </main>
      </div>
    </div>
  );
}
